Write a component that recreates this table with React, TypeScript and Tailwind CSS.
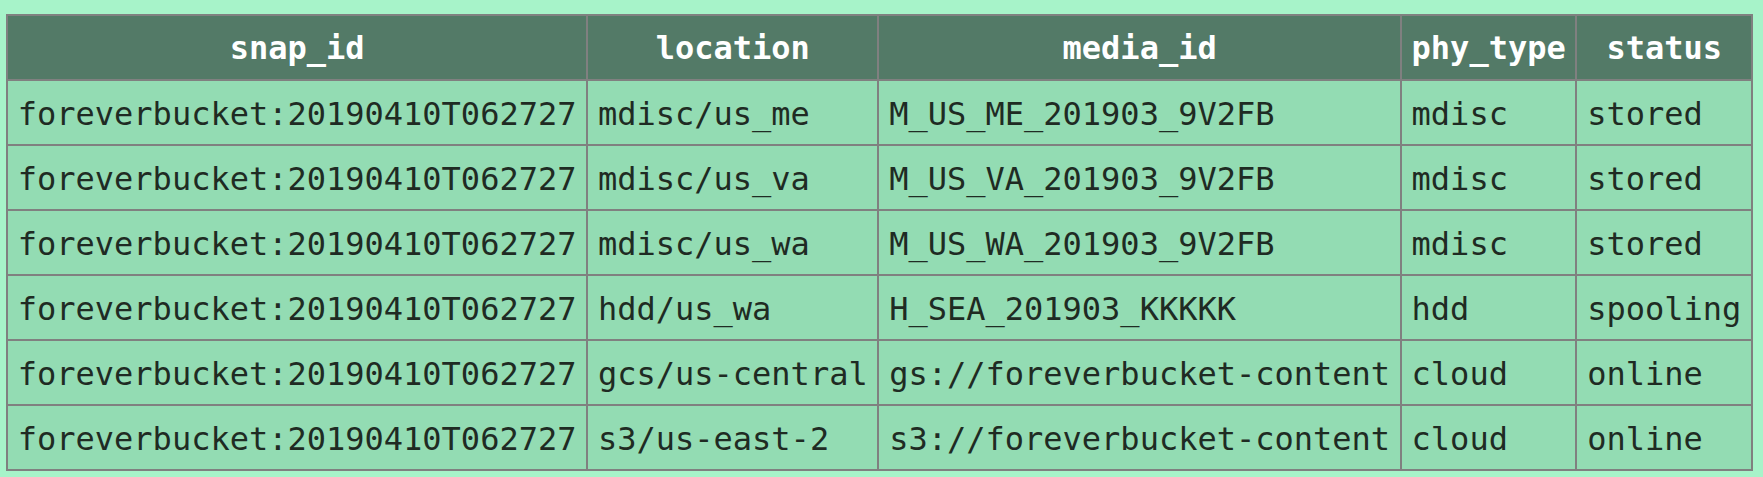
import React from 'react';

type Row = {
  snapId: string;
  location: string;
  mediaId: string;
  phyType: string;
  status: string;
};

const rows: Row[] = [
  { snapId: 'foreverbucket:20190410T062727', location: 'mdisc/us_me', mediaId: 'M_US_ME_201903_9V2FB', phyType: 'mdisc', status: 'stored' },
  { snapId: 'foreverbucket:20190410T062727', location: 'mdisc/us_va', mediaId: 'M_US_VA_201903_9V2FB', phyType: 'mdisc', status: 'stored' },
  { snapId: 'foreverbucket:20190410T062727', location: 'mdisc/us_wa', mediaId: 'M_US_WA_201903_9V2FB', phyType: 'mdisc', status: 'stored' },
  { snapId: 'foreverbucket:20190410T062727', location: 'hdd/us_wa', mediaId: 'H_SEA_201903_KKKKK', phyType: 'hdd', status: 'spooling' },
  { snapId: 'foreverbucket:20190410T062727', location: 'gcs/us-central', mediaId: 'gs://foreverbucket-content', phyType: 'cloud', status: 'online' },
  { snapId: 'foreverbucket:20190410T062727', location: 's3/us-east-2', mediaId: 's3://foreverbucket-content', phyType: 'cloud', status: 'online' },
];

const headers = ['snap_id', 'location', 'media_id', 'phy_type', 'status'];

export default function App() {
  return (
    <div className="min-h-screen bg-[#a7f3c9] pl-[6px] pt-[14px] font-['DejaVu_Sans_Mono',monospace]">
      <table className="border-collapse border-2 border-[#808080] text-[32px] leading-[43px]">
        <thead>
          <tr className="bg-[#537a67]">
            {headers.map(h => (
              <th key={h} className="border-2 border-[#808080] px-[9.75px] pt-[11px] pb-[9px] text-center font-bold text-white whitespace-nowrap">
                {h}
              </th>
            ))}
          </tr>
        </thead>
        <tbody>
          {rows.map((r, i) => (
            <tr key={i} className="bg-[#93dcb3] text-[#1f2b23]">
              <td className="border-2 border-[#808080] px-[9.75px] pt-[12px] pb-[8px] whitespace-nowrap">{r.snapId}</td>
              <td className="border-2 border-[#808080] px-[9.75px] pt-[12px] pb-[8px] whitespace-nowrap">{r.location}</td>
              <td className="border-2 border-[#808080] px-[9.75px] pt-[12px] pb-[8px] whitespace-nowrap">{r.mediaId}</td>
              <td className="border-2 border-[#808080] px-[9.75px] pt-[12px] pb-[8px] whitespace-nowrap">{r.phyType}</td>
              <td className="border-2 border-[#808080] px-[9.75px] pt-[12px] pb-[8px] whitespace-nowrap">{r.status}</td>
            </tr>
          ))}
        </tbody>
      </table>
    </div>
  );
}
